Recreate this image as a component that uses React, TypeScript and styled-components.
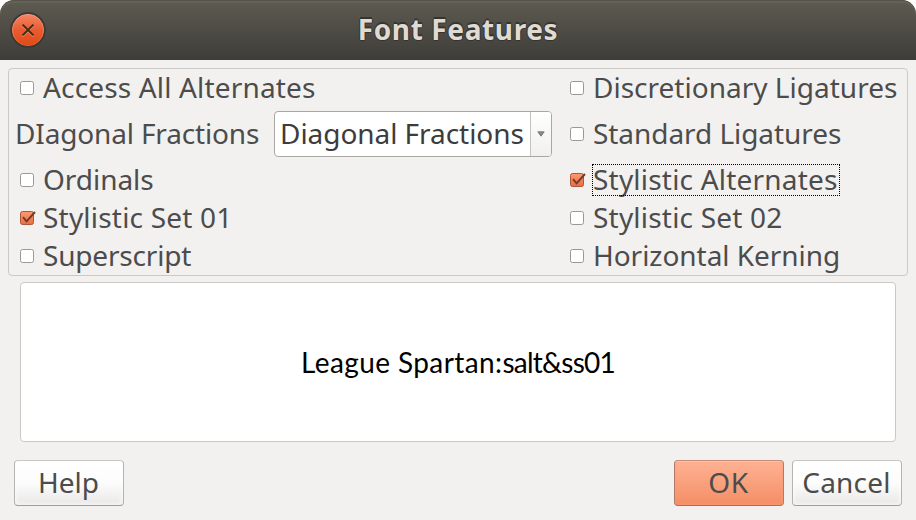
import React from 'react';
import styled, { createGlobalStyle, css } from 'styled-components';

const GlobalStyle = createGlobalStyle`
  *, *::before, *::after { box-sizing: border-box; }
  body { margin: 0; background: #fff; }
  button { font: inherit; color: inherit; padding: 0; margin: 0; }
`;

const Dialog = styled.div`
  width: 916px;
  height: 520px;
  display: flex;
  flex-direction: column;
  background: #f2f1f0;
  border-radius: 14px 14px 0 0;
  overflow: hidden;
  font-family: 'Noto Sans', 'Open Sans', sans-serif;
  font-size: 28px;
  line-height: 32px;
  color: #4c4c4c;
`;

const TitleBar = styled.header`
  flex: none;
  height: 60px;
  display: grid;
  grid-template-columns: 36px 1fr 36px;
  align-items: center;
  padding: 0 10px;
  border-radius: 14px 14px 0 0;
  background: linear-gradient(#5d5a50 0, #5a574e 8px, #3e3d39 60px);
  box-shadow: inset 0 1px 0 #55534a, inset 0 3px 0 #656256;
`;

const CloseButton = styled.button`
  width: 36px;
  height: 36px;
  border: 0;
  background: none;
  display: flex;
`;

const Title = styled.h1`
  margin: 0;
  padding-bottom: 2px;
  text-align: center;
  font-size: 28px;
  font-weight: 700;
  letter-spacing: 0.63px;
  color: #dfdbd2;
  text-shadow: 0 -1px 0 #353431, -1px 0 0 #353431, 1px 0 0 #353431, 0 -2px 0 #353431, 0 1px 0 #353431;
`;

const Features = styled.section`
  flex: none;
  margin: 8px 8px 0;
  display: grid;
  grid-template-columns: 550px 1fr;
  grid-template-rows: 38px 54px 38px 38px 38px;
  border: 1px solid #cbc9c7;
  border-radius: 4px;
`;

const Option = styled.label`
  display: flex;
  align-items: center;
  gap: 6px;
  padding-left: 11px;
`;

const SelectRow = styled.div`
  display: flex;
  align-items: center;
  justify-content: space-between;
  padding: 0 7px 0 6px;
`;

const OptionText = styled.span<{ $spacing: number; $focused?: boolean }>`
  height: 32px;
  padding: 0 1px;
  line-height: 30px;
  letter-spacing: ${(p) => p.$spacing}px;
  white-space: nowrap;
  ${(p) =>
    p.$focused &&
    css`
      outline: 1px dotted #000;
      outline-offset: -1px;
      padding-right: 2px;
    `}
`;

const SelectLabel = styled.span`
  letter-spacing: -0.15px;
  padding-bottom: 2px;
  white-space: nowrap;
`;

const Select = styled.div`
  width: 278px;
  height: 46px;
  display: grid;
  grid-template-columns: 1fr 21px;
  border: 1px solid #a9a7a3;
  border-radius: 4px;
  background: #fff;
  color: #3c3c3c;
  overflow: hidden;
`;

const SelectValue = styled.span`
  padding-left: 5px;
  line-height: 42px;
  letter-spacing: -0.05px;
  white-space: nowrap;
`;

const SelectArrow = styled.span`
  display: flex;
  align-items: center;
  justify-content: center;
  border-left: 1px solid #c4c2bf;
  background: linear-gradient(#fff, #f1f0ef);
`;

const Preview = styled.div`
  flex: none;
  height: 160px;
  margin: 6px 20px 0;
  padding-bottom: 1px;
  display: flex;
  align-items: center;
  justify-content: center;
  border: 1px solid #cbc9c7;
  border-radius: 4px;
  background: #fff;
  font-family: Lato, sans-serif;
  color: #000;
`;

const PreviewText = styled.span`
  letter-spacing: 0.4px;
  white-space: nowrap;
`;

const FeatureTags = styled.span`
  letter-spacing: -0.75px;
`;

const Actions = styled.footer`
  display: flex;
  gap: 8px;
  margin: 18px 14px 0;
`;

const Spacer = styled.span`
  flex: 1;
`;

const ActionButton = styled.button<{ $primary?: boolean; $spacing?: number }>`
  width: 110px;
  height: 46px;
  padding-right: 1px;
  line-height: 42px;
  padding-bottom: 2px;
  letter-spacing: ${(p) => p.$spacing ?? 0}px;
  border: 1px solid;
  border-radius: 4px;
  ${(p) =>
    p.$primary
      ? css`
          border-color: #bf8d78 #b07a66 #a37260;
          background: linear-gradient(#ffb294, #f48e66);
          box-shadow: inset 0 1px 0 #ffc1a8, inset 0 0 3px #ff9c76;
        `
      : css`
          border-color: #c9c7c4 #b5b3b0 #a09e9b;
          background: linear-gradient(#fff, #fcfcfc 50%, #e9e8e7);
          box-shadow: inset 0 0 5px #fff;
        `}
`;

function CloseIcon() {
  return (
    <svg width="36" height="36" viewBox="0 0 36 36">
      <defs>
        <linearGradient id="close-fill" x1="0" y1="0" x2="0" y2="1">
          <stop offset="0" stopColor="#f58463" />
          <stop offset="0.5" stopColor="#e95c31" />
          <stop offset="1" stopColor="#df4a16" />
        </linearGradient>
        <linearGradient id="close-rim" x1="0" y1="0" x2="0" y2="1">
          <stop offset="0" stopColor="#fa9d80" />
          <stop offset="1" stopColor="#ea5a28" />
        </linearGradient>
      </defs>
      <circle cx="18" cy="18" r="17.8" fill="#3a3935" />
      <circle cx="18" cy="18" r="15.6" fill="url(#close-fill)" stroke="url(#close-rim)" />
      <path d="M12.6 13.6l10.8 10.8M23.4 13.6L12.6 24.4" stroke="#f58a68" strokeWidth="1.8" />
      <path d="M12.6 12.6l10.8 10.8M23.4 12.6L12.6 23.4" stroke="#3c2d13" strokeWidth="2" />
    </svg>
  );
}

function CheckIcon({ checked }: { checked?: boolean }) {
  return (
    <svg width="16" height="18" viewBox="0 0 16 18">
      <defs>
        <linearGradient id="check-fill" x1="0" y1="0" x2="0" y2="1">
          <stop offset="0" stopColor="#ff9a70" />
          <stop offset="1" stopColor="#ec6b3d" />
        </linearGradient>
      </defs>
      <rect
        x="0.5"
        y="2.5"
        width="13"
        height="13"
        rx="2"
        fill={checked ? 'url(#check-fill)' : '#fff'}
        stroke={checked ? '#a9583d' : '#9a9894'}
      />
      {checked && (
        <path d="M3 8.2l3.6 4.2L15 3" fill="none" stroke="#6b3c2a" strokeWidth="1.9" />
      )}
    </svg>
  );
}

function FeatureOption(props: { text: string; spacing: number; checked?: boolean; focused?: boolean }) {
  return (
    <Option>
      <CheckIcon checked={props.checked} />
      <OptionText $spacing={props.spacing} $focused={props.focused}>
        {props.text}
      </OptionText>
    </Option>
  );
}

export default function App() {
  return (
    <>
      <GlobalStyle />
      <Dialog role="dialog">
        <TitleBar>
          <CloseButton aria-label="Close">
            <CloseIcon />
          </CloseButton>
          <Title>Font Features</Title>
        </TitleBar>
        <Features>
          <FeatureOption text="Access All Alternates" spacing={0.16} />
          <FeatureOption text="Discretionary Ligatures" spacing={0.01} />
          <SelectRow>
            <SelectLabel>DIagonal Fractions</SelectLabel>
            <Select>
              <SelectValue>Diagonal Fractions</SelectValue>
              <SelectArrow>
                <svg width="8" height="6" viewBox="0 0 8 6">
                  <path d="M0.8 0.8h6.4L4 5.2z" fill="#8c8a87" stroke="#6f6d6a" strokeWidth="0.8" />
                </svg>
              </SelectArrow>
            </Select>
          </SelectRow>
          <FeatureOption text="Standard Ligatures" spacing={-0.06} />
          <FeatureOption text="Ordinals" spacing={-0.04} />
          <FeatureOption text="Stylistic Alternates" spacing={0.2} checked focused />
          <FeatureOption text="Stylistic Set 01" spacing={0.2} checked />
          <FeatureOption text="Stylistic Set 02" spacing={0.2} />
          <FeatureOption text="Superscript" spacing={-0.18} />
          <FeatureOption text="Horizontal Kerning" spacing={-0.04} />
        </Features>
        <Preview>
          <PreviewText>
            League Spartan:<FeatureTags>salt&amp;ss01</FeatureTags>
          </PreviewText>
        </Preview>
        <Actions>
          <ActionButton>Help</ActionButton>
          <Spacer />
          <ActionButton $primary $spacing={0.6}>OK</ActionButton>
          <ActionButton $spacing={0.2}>Cancel</ActionButton>
        </Actions>
      </Dialog>
    </>
  );
}
